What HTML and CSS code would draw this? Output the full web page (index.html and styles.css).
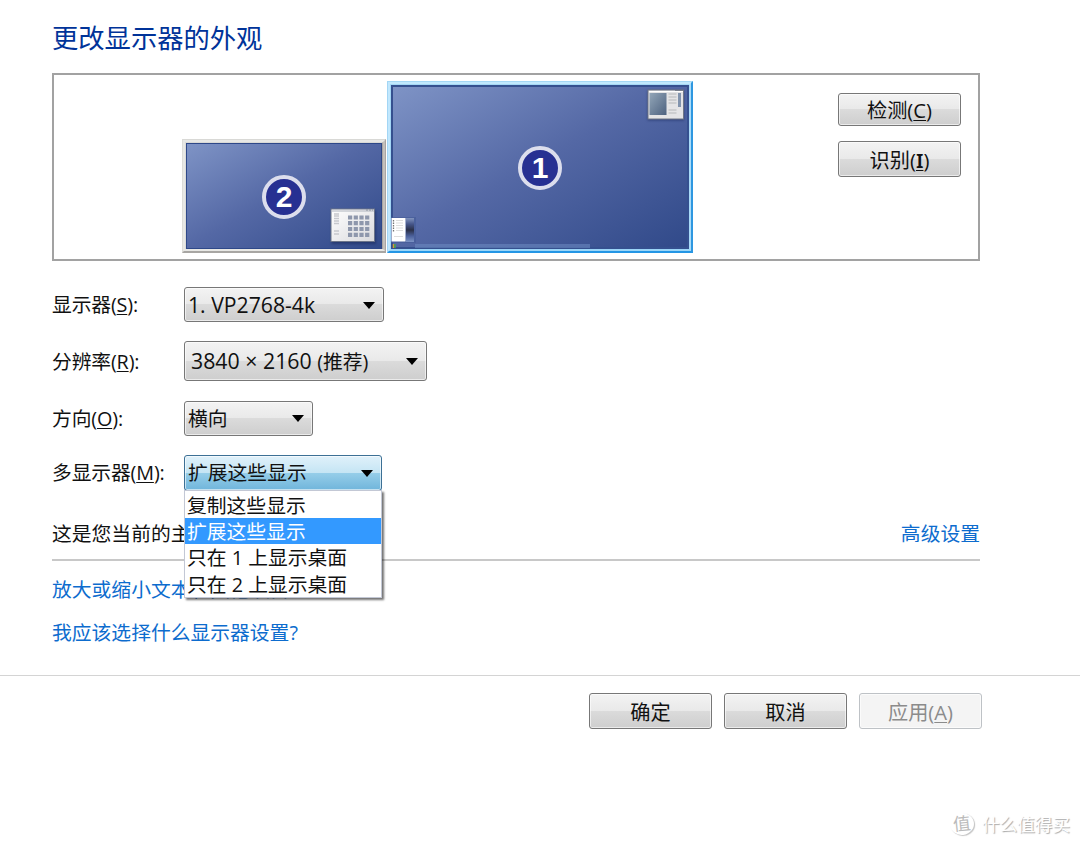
FILE: index.html
```html
<!DOCTYPE html>
<html lang="zh-CN">

<head>
  <meta charset="UTF-8">
  <meta name="viewport" content="width=device-width, initial-scale=1.0">
  <title>更改显示器的外观</title>
  <link rel="stylesheet" href="styles.css">
</head>

<body>
  <main>
    <h1>更改显示器的外观</h1>

    <section class="preview">
      <div class="monitors">
        <div class="monitor secondary">
          <span class="badge">2</span>
          <svg class="thumb thumb-grid" width="46" height="35" viewBox="0 0 46 35">
            <defs>
              <linearGradient id="paper" x1="0" y1="0" x2="1" y2="1">
                <stop offset="0" stop-color="#ffffff" />
                <stop offset="1" stop-color="#d9d9dd" />
              </linearGradient>
            </defs>
            <rect x="1" y="1" width="43.5" height="32.5" fill="url(#paper)" stroke="#6b7489" />
            <path d="M2 3h42" stroke="#aeb3bd" stroke-width="1" />
            <path d="M36 2h7" stroke="#8a919e" stroke-dasharray="2 1" />
            <path d="M4 6h5M4 8h5M4 10.5h5M4 13h5M4 15.5h5M4 23h5M4 26h5" stroke="#c6c8cd" stroke-width="1.6" />
            <g stroke="#8e97ac" stroke-width="4.2" stroke-dasharray="4.2 1.5">
              <path d="M18 9.5h22" />
              <path d="M18 15.2h22" />
              <path d="M18 21h22" />
              <path d="M18 26.8h22" />
            </g>
          </svg>
        </div>

        <div class="monitor primary">
          <span class="badge">1</span>
          <svg class="thumb thumb-photo" width="38" height="32" viewBox="0 0 38 32">
            <defs>
              <linearGradient id="photo" x1="0" y1="0" x2="1" y2="1">
                <stop offset="0" stop-color="#93a6b8" />
                <stop offset="1" stop-color="#4d6280" />
              </linearGradient>
            </defs>
            <rect x="1" y="1" width="35.5" height="29" fill="#e4e4e6" stroke="#6f7686" />
            <path d="M2 2.5h34" stroke="#fff" />
            <path d="M28 1.5h8" stroke="#777e8c" />
            <rect x="2.5" y="4" width="17" height="22" fill="url(#photo)" />
            <path d="M21.5 5h8M21.5 8h8M21.5 11h8M21.5 14h8M21.5 21h8M21.5 24h8" stroke="#c5c6c9" stroke-width="1.7" />
            <path d="M32.5 4v14" stroke="#8193ad" stroke-width="3" />
          </svg>
          <svg class="thumb thumb-start" width="26" height="34" viewBox="0 0 26 34">
            <defs>
              <linearGradient id="menu" x1="0" y1="0" x2="0" y2="1">
                <stop offset="0" stop-color="#8194be" />
                <stop offset="0.25" stop-color="#46568a" />
                <stop offset="0.5" stop-color="#2b3047" />
                <stop offset="0.75" stop-color="#4b609b" />
                <stop offset="1" stop-color="#7c93c5" />
              </linearGradient>
            </defs>
            <rect x="0" y="1" width="25" height="26" fill="#465c98" opacity="0.7" />
            <rect x="15" y="2" width="8" height="24" fill="url(#menu)" />
            <rect x="0.5" y="2" width="14" height="23.5" fill="#fff" />
            <path d="M2.5 4v12" stroke="#777" stroke-width="1.3" stroke-dasharray="1.5 1" />
            <path d="M5 4.5h7M5 7h7M5 9.5h7M5 12h7M5 14.5h7M3 20.5h9" stroke="#ddd" />
            <path d="M2.5 28v4" stroke="#d79a35" stroke-width="1.5" />
            <path d="M4 28v4" stroke="#4aa34e" stroke-width="1.5" />
          </svg>
          <div class="taskbar"></div>
        </div>
      </div>

      <div class="preview-actions">
        <button class="detect">检测(<u>C</u>)</button>
        <button>识别(<u class="serif-i">I</u>)</button>
      </div>
    </section>

    <div class="settings">
      <div class="row display">
        <label>显示器(<u>S</u>):</label>
        <div class="select"><span>1. VP2768-4k</span><i class="arrow"></i></div>
      </div>
      <div class="row resolution">
        <label>分辨率(<u>R</u>):</label>
        <div class="select"><span>3840 × 2160 <small>(推荐)</small></span><i class="arrow"></i></div>
      </div>
      <div class="row orientation">
        <label>方向(<u>O</u>):</label>
        <div class="select"><span>横向</span><i class="arrow"></i></div>
      </div>
      <div class="row multiple">
        <label>多显示器(<u>M</u>):</label>
        <div class="select open">
          <span>扩展这些显示</span><i class="arrow"></i>
          <ul class="options">
            <li>复制这些显示</li>
            <li class="selected">扩展这些显示</li>
            <li>只在 1 上显示桌面</li>
            <li>只在 2 上显示桌面</li>
          </ul>
        </div>
      </div>
    </div>

    <div class="status">
      <span>这是您当前的主显示器。</span>
      <a href="#">高级设置</a>
    </div>

    <div class="links">
      <a href="#">放大或缩小文本和其他项目</a>
      <a href="#">我应该选择什么显示器设置?</a>
    </div>
  </main>

  <footer>
    <button>确定</button>
    <button>取消</button>
    <button disabled>应用(<u>A</u>)</button>
  </footer>

  <div class="watermark">
    <span class="logo">值</span>
    <span>什么值得买</span>
  </div>
</body>

</html>
```

FILE: styles.css
```css
* {
  box-sizing: border-box;
}

body {
  margin: 0;
  height: 847px;
  position: relative;
  overflow: hidden;
  background: #fff;
  color: #111;
  font-family: "Open Sans", "Noto Sans CJK SC", sans-serif;
  font-size: 19.8px;
  line-height: 26px;
}

main {
  height: 675px;
  padding: 19px 100px 0 52px;
}

h1 {
  margin: 0;
  height: 54px;
  color: #039;
  font-size: 26.3px;
  font-weight: 400;
  line-height: 38px;
}

a {
  color: #0d6cce;
  text-decoration: none;
}

u {
  text-decoration-thickness: 1px;
  text-underline-offset: 2px;
}

/* monitor arrangement */
.preview {
  display: flex;
  justify-content: space-between;
  height: 188px;
  padding: 7px 17px 6px 128px;
  border: 2px solid #a2a2a2;
}

.monitors {
  display: flex;
  align-items: flex-end;
  gap: 1px;
}

.monitor {
  position: relative;
  display: flex;
  align-items: center;
  justify-content: center;
  background: linear-gradient(150deg, #7f94c6 0%, #5468a5 48%, #304989 100%);
}

.secondary {
  width: 204px;
  height: 114px;
  border: 4px solid;
  border-color: #d9d9d6 #aaa6a3 #a8a6a3 #dcdcd8;
  box-shadow: inset 0 0 0 1px #2e4889;
}

.secondary::before {
  content: "";
  position: absolute;
  inset: -3px -3px -2px -3px;
  border: 2px solid #e8e8e5;
  border-right-color: #c4c0bc;
}

.primary {
  width: 306px;
  height: 172px;
  border: 4px solid;
  border-color: #a5d8f5 #2e97e0 #2496e5 #a3d6f5;
  box-shadow: inset 0 0 0 2px #35508f;
}

.primary::before {
  content: "";
  position: absolute;
  inset: -3px -2px -2px -3px;
  border: 2px solid #c9ecff;
  border-bottom-color: #b9e5fc;
  opacity: 0.8;
}

.badge {
  position: relative;
  top: 0.5px;
  width: 44px;
  height: 44px;
  border: 4px solid #dcdeed;
  border-radius: 50%;
  background: #273092;
  color: #fff;
  font: bold 30px/36px "Liberation Sans", sans-serif;
  text-align: center;
}

.thumb {
  position: absolute;
}

.thumb-grid {
  right: 6px;
  bottom: 6px;
  filter: drop-shadow(1px 2px 1px rgba(20, 35, 85, 0.5));
}

.thumb-photo {
  top: 4px;
  right: 4px;
  filter: drop-shadow(0 1px 1px rgba(20, 35, 85, 0.5));
}

.thumb-start {
  left: 0;
  bottom: -1px;
}

.taskbar {
  position: absolute;
  left: 24px;
  bottom: 1px;
  width: 175px;
  height: 4px;
  background: rgba(110, 140, 195, 0.55);
}

.preview-actions {
  display: flex;
  flex-direction: column;
  gap: 15px;
  padding-top: 11px;
}

/* buttons and selects */
button,
.select {
  border: 1px solid #777;
  border-radius: 3px;
  background: linear-gradient(#f3f3f3 0%, #e9e9e9 49%, #dbdbdb 50%, #cecece 100%);
  box-shadow: inset 0 0 0 1px rgba(255, 255, 255, 0.6);
  color: #111;
  font: inherit;
}

button {
  width: 123px;
  height: 36px;
  padding: 1px 0 0;
  font-size: 20.2px;
}

.detect {
  height: 33px;
}

.serif-i {
  font-family: "Noto Sans", sans-serif;
  font-weight: 600;
}

button:disabled {
  border-color: #bec2c6;
  background: #f4f4f4;
  color: #8b8b8b;
}

.settings {
  display: grid;
  grid-template-rows: 35px 40px 35px 36px;
  row-gap: 19.3px;
  padding-top: 26px;
}

.row {
  display: flex;
  align-items: center;
}

.row label {
  width: 132px;
  padding-top: 1px;
  letter-spacing: -0.15px;
}

.select {
  position: relative;
  display: flex;
  align-items: center;
  justify-content: space-between;
  height: 100%;
  padding: 1px 8px 0 3px;
}

.display .select {
  width: 200px;
  font-size: 21.2px;
}

.resolution .select {
  width: 243px;
  padding-left: 6px;
  font-size: 21.3px;
}

.resolution small {
  font-size: 19.8px;
}

.orientation .select {
  width: 129px;
}

.multiple .select {
  width: 198px;
}

.arrow {
  border: 6.5px solid transparent;
  border-top: 7px solid #000;
  border-bottom: 0;
}

.select.open {
  border-color: #3c7095;
  background: linear-gradient(#e0f1fa 0%, #c5e5f4 49%, #96cee9 50%, #70b5db 100%);
}

.options {
  position: absolute;
  top: 34px;
  left: -1px;
  z-index: 1;
  width: 198px;
  margin: 0;
  padding: 1px 0 0;
  border: 1px solid #c3c8d5;
  background: #fff;
  box-shadow: 2px 2px 2px rgba(0, 0, 0, 0.55);
  list-style: none;
}

.options li {
  height: 26.3px;
  padding-left: 2px;
  line-height: 27px;
  white-space: nowrap;
}

.options .selected {
  background: #39f;
  color: #fff;
}

.status {
  display: flex;
  justify-content: space-between;
  height: 70px;
  padding-top: 30px;
  border-bottom: 2px solid #c8c8c8;
}

.links {
  display: flex;
  flex-direction: column;
  gap: 17px;
  padding-top: 16px;
}

footer {
  display: flex;
  justify-content: flex-end;
  gap: 12px;
  padding: 17px 98px 0 0;
  border-top: 1px solid #d4d4d4;
}

.watermark {
  position: absolute;
  right: 10px;
  bottom: 10px;
  display: flex;
  align-items: center;
  gap: 8px;
  color: #fff;
  font-size: 17.6px;
  text-shadow: 1px 1px 1px #aaa;
}

.logo {
  width: 24px;
  height: 22px;
  border-radius: 50%;
  box-shadow: 1px 1px 1px #c4c4c4;
  color: #bbb;
  line-height: 21px;
  text-align: center;
  text-shadow: none;
  transform: rotate(-6deg);
}
```
